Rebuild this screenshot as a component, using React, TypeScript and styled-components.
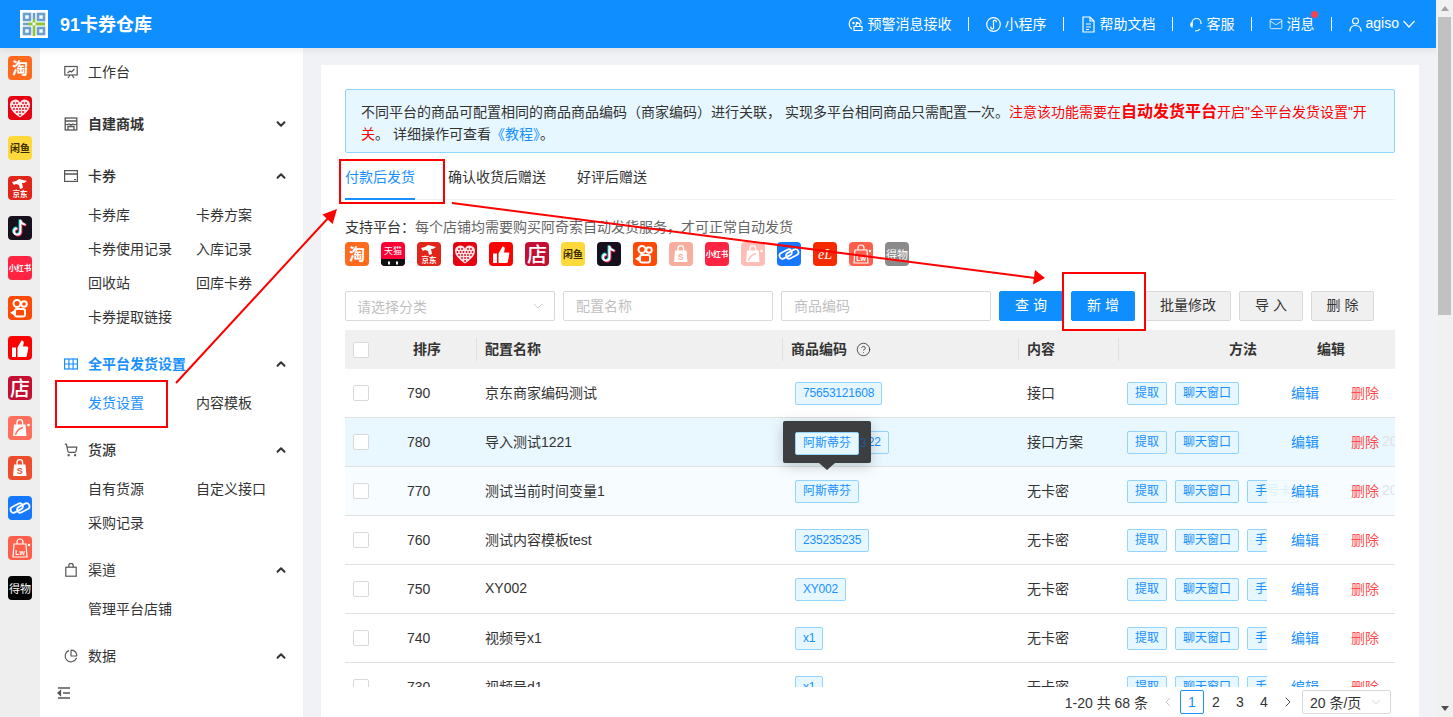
import React from 'react';
import styled, { createGlobalStyle } from 'styled-components';
import { ChevronDown, ChevronUp, CircleHelp, ChevronLeft, ChevronRight, Mail, ShoppingCart, PieChart } from 'lucide-react';

const FONT = `"Liberation Sans", "Noto Sans CJK SC", sans-serif`;
const BLUE = '#0f8eff';

const Global = createGlobalStyle`
  html, body { margin: 0; padding: 0; height: 717px; overflow: hidden; background: #f0f2f5; }
  body { font-family: ${FONT}; font-size: 14px; color: #333; }
  * { box-sizing: border-box; }
`;

const Page = styled.div`position: relative; display: flex; width: 1453px; height: 717px; overflow: hidden;`;
const Main = styled.div`flex: 1; min-width: 0; display: flex; flex-direction: column;`;

const Header = styled.header`
  height: 48px; flex: none; background: ${BLUE}; display: flex; align-items: center;
  padding: 0 21px 0 20px; color: #fff; position: relative; z-index: 2;
  box-shadow: 0 2px 8px rgba(0,21,41,.08);
`;
const LogoBox = styled.div`width: 28px; height: 28px; background: #fff; margin-right: 12px; display: flex;`;
const Title = styled.div`font-size: 18px; font-weight: 700; flex: 1; margin-top: -2px;`;
const NavItem = styled.div`display: flex; align-items: center; gap: 4px; font-size: 14px; white-space: nowrap;`;
const NavText = styled.span`position: relative; margin-top: -2px;`;
const NavSep = styled.i`width: 1px; height: 14px; background: #fff; margin: 0 17px 0 16px;`;
const Dot = styled.i`position: absolute; top: -2px; right: -3px; width: 7px; height: 7px; border-radius: 50%; background: #f5424d;`;

const Body = styled.div`flex: 1; min-height: 0; display: flex;`;
const Rail = styled.nav`width: 40px; flex: none; background: #eee; padding: 8px 8px 0; display: flex; flex-direction: column; gap: 16px;`;
const Sidebar = styled.aside`width: 263px; flex: none; background: #fff; display: flex; flex-direction: column; overflow: hidden;`;
const MenuList = styled.div`flex: 1; min-height: 0; overflow: hidden; display: flex; flex-direction: column; gap: 4px;`;
const MenuSection = styled.div`flex: none;`;
const MenuHead = styled.div<{ $active?: boolean; $weight: number }>`
  height: 48px; display: flex; align-items: center; padding: 0 15px 0 24px; gap: 10px;
  color: ${p => (p.$active ? '#1890ff' : '#333')}; font-weight: ${p => p.$weight};
  span { flex: 1; margin-top: -2px; }
  svg { flex: none; }
`;
const SubGrid = styled.div`display: grid; grid-template-columns: 108px 108px; padding-left: 48px; margin: -2px 0 2px;`;
const SubItem = styled.div<{ $active?: boolean }>`height: 34px; line-height: 34px; white-space: nowrap; color: ${p => (p.$active ? '#1890ff' : '#333')};`;
const SideFoot = styled.div`height: 48px; flex: none; display: flex; align-items: center; padding-left: 17px; background: #fff;`;

const Content = styled.main`flex: 1; min-width: 0; padding: 17px 17px 0 18px; display: flex;`;
const Card = styled.section`flex: 1; min-width: 0; background: #fff; padding: 24px 24px 0; display: flex; flex-direction: column;`;

const Alert = styled.div`
  height: 64px; flex: none; background: #e6f7ff; border: 1px solid #91d5ff; border-radius: 2px;
  padding: 11px 15px; line-height: 22px; white-space: nowrap; color: #333;
`;
const Red = styled.span`color: #f00;`;
const BigRed = styled.b`color: #f00; font-size: 16px; line-height: 1;`;
const LinkText = styled.span`color: #1890ff;`;

const Tabs = styled.div`height: 47px; flex: none; display: flex; border-bottom: 1px solid #f0f0f0;`;
const Tab = styled.div<{ $active?: boolean; $gap: number }>`
  height: 47px; line-height: 48px; margin-right: ${p => p.$gap}px; white-space: nowrap;
  color: ${p => (p.$active ? '#1890ff' : '#333')};
  border-bottom: 2px solid ${p => (p.$active ? '#1890ff' : 'transparent')};
`;

const Notice = styled.div`height: 20px; margin-top: 17px; line-height: 20px; flex: none; color: #666; b { font-weight: 400; color: #333; }`;
const PlatformRow = styled.div`display: flex; gap: 12px; margin-top: 5px; flex: none;`;
const LogoWrap = styled.div<{ $faded?: boolean }>`width: 24px; height: 24px; flex: none; opacity: ${p => (p.$faded ? 0.45 : 1)}; svg { display: block; }`;

const Toolbar = styled.div`display: flex; gap: 8px; margin-top: 25px; height: 30px; flex: none;`;
const Field = styled.input`
  width: 210px; height: 30px; border: 1px solid #d9d9d9; border-radius: 2px; padding: 0 12px;
  font: 14px ${FONT}; color: #333; outline: none; background: #fff;
  &::placeholder { color: #bfbfbf; opacity: 1; }
`;
const SelectBox = styled.div`
  width: 210px; height: 30px; border: 1px solid #d9d9d9; border-radius: 2px; padding: 0 8px 0 11px;
  display: flex; align-items: center; justify-content: space-between; color: #bfbfbf;
`;
const Btn = styled.div<{ $primary?: boolean; $w: number; $after?: number }>`
  width: ${p => p.$w}px; height: 30px; line-height: 27px; text-align: center; border-radius: 2px; white-space: pre;
  margin-right: ${p => p.$after ?? 0}px;
  background: ${p => (p.$primary ? BLUE : '#f0f0f0')}; color: ${p => (p.$primary ? '#fff' : '#333')};
  border: 1px solid ${p => (p.$primary ? BLUE : '#d9d9d9')};
`;

const TableWrap = styled.div`flex: 1; min-height: 0; margin-top: 9px; overflow: hidden;`;
const COLS = '50px 81px 306px 236px 100px 149px 128px';
const HeadRow = styled.div`
  display: grid; grid-template-columns: ${COLS}; height: 39px; background: #f0f0f0; align-items: center; font-weight: 700; color: #333;
`;
const HeadCell = styled.div<{ $pad: number; $line?: boolean }>`
  padding-left: ${p => p.$pad}px; display: flex; align-items: center; gap: 9px; height: 23px; white-space: nowrap;
  border-left: ${p => (p.$line ? '1px solid #e0e0e0' : '0')};
`;
const HeadLabel = styled.span`margin-top: -3px;`;
const Row = styled.div<{ $bg: string }>`
  display: grid; grid-template-columns: ${COLS}; height: 49px; align-items: stretch;
  background: ${p => p.$bg}; border-bottom: 1px solid #e0e0e0;
`;
const Cell = styled.div<{ $pad: number; $up?: boolean }>`
  padding-left: ${p => p.$pad}px; display: flex; align-items: center; white-space: nowrap; position: relative; color: #333;
  padding-bottom: ${p => (p.$up ? 2 : 0)}px;
`;
const MethodCell = styled(Cell)<{ $open?: boolean }>`gap: 8px; overflow: ${p => (p.$open ? 'visible' : 'hidden')};`;
const FixedCell = styled.div<{ $bg: string }>`
  padding: 0 0 2px 24px; display: flex; align-items: center; position: relative; overflow: hidden; white-space: nowrap; background: ${p => p.$bg};
`;
const EditLink = styled.span`color: #1890ff; margin-right: 32px;`;
const DelLink = styled.span`color: #ff4d4f; margin-right: 3px;`;
const Ghost = styled.span`color: #dce3e7;`;
const Check = styled.i`width: 16px; height: 16px; border: 1px solid #d9d9d9; border-radius: 2px; background: #fff; display: block; flex: none;`;
const Tag = styled.span<{ $narrow?: boolean }>`
  display: inline-block; height: 23px; line-height: 20px; padding: 0 7px; font-size: 12px; color: #1890ff; background: #e6f7ff;
  border: 1px solid #91d5ff; border-radius: 2px; white-space: nowrap; flex: none;
  letter-spacing: ${p => (p.$narrow ? '-0.2px' : '0')};
`;
const Tooltip = styled.div`
  position: absolute; left: 1px; top: 3px; width: 88px; height: 42px; background: #3c3e40; border-radius: 2px; z-index: 5;
  padding: 11px 0 0 12px; box-shadow: 0 3px 14px rgba(0,0,0,.2);
  &::after { content: ''; position: absolute; left: 36px; bottom: -7px; border: 8px solid transparent; border-bottom: 0; border-top: 7px solid #3c3e40; }
`;
const ShowThrough = styled.span`position: absolute; left: 77px; top: 12px; font-size: 12px; line-height: 20px; color: #1c5a9c;`;

const Pager = styled.div`height: 30px; flex: none; display: flex; align-items: center; justify-content: flex-end; padding-right: 4px; background: #fff;`;
const Total = styled.span`margin-right: 8px; color: #333;`;
const PageBtn = styled.div<{ $active?: boolean; $muted?: boolean }>`
  width: 24px; height: 24px; line-height: 22px; text-align: center; border-radius: 2px;
  display: flex; align-items: center; justify-content: center;
  color: ${p => (p.$active ? '#1890ff' : p.$muted ? '#bfbfbf' : '#333')};
  border: 1px solid ${p => (p.$active ? '#1890ff' : 'transparent')};
`;
const PageSize = styled.div`
  width: 89px; height: 24px; margin-left: 2px; border: 1px solid #d9d9d9; border-radius: 2px;
  display: flex; align-items: center; justify-content: space-between; padding: 0 7px; color: #333; white-space: nowrap;
`;

const ScrollTrack = styled.div`width: 17px; flex: none; background: #f1f1f1; display: flex; flex-direction: column; align-items: center; position: relative; z-index: 3;`;
const ScrollUp = styled.i`
  margin-top: 6px; height: 0; border: 4px solid transparent; border-top: 0; border-bottom: 5px solid #a3a3a3;
`;
const ScrollThumb = styled.i`width: 13px; height: 298px; margin-top: 6px; background: #c1c1c1;`;
const ScrollDown = styled.i`
  margin-top: auto; margin-bottom: 6px; height: 0; border: 4px solid transparent; border-bottom: 0; border-top: 5px solid #505050;
`;

const Notes = styled.svg`position: absolute; left: 0; top: 0; width: 1453px; height: 717px; pointer-events: none; z-index: 10;`;

type Kind = 'tao' | 'tmall' | 'jd' | 'pdd' | 'zan' | 'dian' | 'xianyu' | 'douyin' | 'kuai' | 'shopee' | 'xhs' | 'bag' | 'link' | 'el' | 'lw' | 'dewu';

const Txt: React.FC<{ x?: number; y: number; s: number; c?: string; w?: number; children: React.ReactNode; i?: boolean; f?: string }> = ({ x = 12, y, s, c = '#fff', w = 400, children, i, f = FONT }) => (
  <text x={x} y={y} fontSize={s} fill={c} fontWeight={w} textAnchor="middle" fontStyle={i ? 'italic' : 'normal'} fontFamily={f}>{children}</text>
);

const BagShape = () => (
  <>
    <path d="M6 8.500h11.500l1 11.500H5z" fill="#fff" />
    <path d="M9 9V6.500a2.800 2.800 0 0 1 5.600 0V9" fill="none" stroke="#fff" strokeWidth="1.300" />
  </>
);

const Logo: React.FC<{ kind: Kind }> = ({ kind }) => {
  const bg: Record<Kind, string> = {
    tao: '#ff6a1f', tmall: '#ff0036', jd: '#e1251b', pdd: '#e60012', zan: '#ff0000', dian: '#c40f33', xianyu: '#ffd93b', douyin: '#15101c',
    kuai: '#ff4906', shopee: '#ee4d2d', xhs: '#ff2442', bag: '#ff6f5c', link: '#1677ff', el: '#f52a00', lw: '#ff5f4a', dewu: '#000',
  };
  return (
    <svg width="24" height="24" viewBox="0 0 24 24">
      <rect width="24" height="24" rx="4" fill={bg[kind]} />
      {kind === 'tao' && <Txt y={18} s={16} w={700}>淘</Txt>}
      {kind === 'tmall' && (<><path d="M0 17h24v3a4 4 0 0 1-4 4H4a4 4 0 0 1-4-4z" fill="#111" /><Txt y={12} s={9}>天猫</Txt><path d="M8 19.500v3M16 19.500v3" stroke="#fff" strokeWidth="2" /></>)}
      {kind === 'jd' && (<><path d="M4 6l4-1 3-2 8 2-3 2-2 0 1 5-3 1-1-4-3-1-2 1z" fill="#fff" /><Txt y={21} s={7.500} w={700}>京东</Txt></>)}
      {kind === 'pdd' && (<>
        <path d="M12 21.500C6 17.500 2 13.500 2 8.800A5.200 5.200 0 0 1 12 6.800 5.200 5.200 0 0 1 22 8.800C22 13.500 18 17.500 12 21.500Z" fill="#ffe3e5" />
        {[[6, 7], [9, 7], [15, 7], [18, 7], [4.500, 10], [7.500, 10], [10.500, 10], [13.500, 10], [16.500, 10], [19.500, 10], [6, 13], [9, 13], [12, 13], [15, 13], [18, 13], [9, 16], [12, 16], [15, 16], [12, 19]].map(([x, y]) => <circle key={`${x}-${y}`} cx={x} cy={y} r=".9" fill="#e60012" />)}
      </>)}
      {kind === 'zan' && <path d="M4 11.500h4V21H4z M9.500 11.500l4-7c1.500 0 2.500 1 2.200 2.500L15 10.500h4c1 0 1.500 .8 1.300 1.700L18.800 20c-.2 .7-.7 1-1.300 1H9.500z" fill="#fff" />}
      {kind === 'dian' && <Txt y={20} s={20} w={500}>店</Txt>}
      {kind === 'xianyu' && <Txt y={16} s={10} c="#3a2d00" w={700}>闲鱼</Txt>}
      {kind === 'douyin' && (<>
        <path d="M12.500 4v11.500a3.200 3.200 0 1 1-3.200-3.200M12.500 4c.4 2.500 2 4.200 5 4.600" fill="none" stroke="#25f4ee" strokeWidth="2.200" transform="translate(-.8 -.6)" />
        <path d="M12.500 4v11.500a3.200 3.200 0 1 1-3.200-3.200M12.500 4c.4 2.500 2 4.200 5 4.600" fill="none" stroke="#fe2c55" strokeWidth="2.200" transform="translate(.8 .6)" />
        <path d="M12.500 4v11.500a3.200 3.200 0 1 1-3.200-3.200M12.500 4c.4 2.500 2 4.200 5 4.600" fill="none" stroke="#fff" strokeWidth="1.800" />
      </>)}
      {kind === 'kuai' && (<g fill="none" stroke="#fff" strokeWidth="2">
        <circle cx="9" cy="7.500" r="3.500" /><circle cx="16" cy="8" r="2.800" /><rect x="7" y="13" width="10" height="7.500" rx="2" /><path d="M7 15l-3 1.800 3 1.800" />
      </g>)}
      {kind === 'shopee' && (<><BagShape /><Txt x={11.800} y={17.500} s={9} c="#ee4d2d" w={700}>S</Txt></>)}
      {kind === 'xhs' && <Txt y={15} s={7.500} w={700}>小红书</Txt>}
      {kind === 'bag' && (<><BagShape /><path d="M7.500 19c1-4 3.500-6.500 7.500-7.500" stroke="#ff6f5c" strokeWidth="1.400" fill="none" /><circle cx="20.500" cy="9" r="1.300" fill="#fff" /></>)}
      {kind === 'link' && (<g fill="none" stroke="#fff" strokeWidth="1.800" transform="rotate(-28 12 12)">
        <rect x="2.500" y="7.500" width="13" height="6" rx="3" /><rect x="8.500" y="10.500" width="13" height="6" rx="3" />
      </g>)}
      {kind === 'el' && <Txt y={17} s={14} i f={`"Liberation Serif", serif`}>eL</Txt>}
      {kind === 'lw' && (<><path d="M6 8h12l1 13H5z M9 8V6a3 3 0 0 1 6 0v2" fill="none" stroke="#fff" strokeWidth="1.200" /><Txt y={19} s={7} w={700}>Lw</Txt><circle cx="21" cy="9" r="1.200" fill="#fff" /></>)}
      {kind === 'dewu' && <Txt y={16.500} s={11}>得物</Txt>}
    </svg>
  );
};

const QrLogo = () => (
  <svg width="28" height="28" viewBox="0 0 28 28">
    <g fill="none" stroke="#6a9fd0" strokeWidth="2.600">
      <rect x="4" y="4" width="6" height="6" /><rect x="18" y="4" width="6" height="6" /><rect x="4" y="18" width="6" height="6" /><rect x="18" y="18" width="6" height="6" />
      <path d="M14 3v6M3 14h5" />
    </g>
    <path d="M14 9v17M8 14h17" fill="none" stroke="#8cc63f" strokeWidth="2.800" />
    <rect x="12.500" y="12.500" width="3" height="3" fill="#fff" />
  </svg>
);

const line = { fill: 'none', stroke: 'currentColor', strokeWidth: 1.2 } as const;
const AlertIcon = () => (<svg width="16" height="16" viewBox="0 0 16 16" {...line}><path d="M4 13C2 11.800 1.200 9.800 1.200 7.800a6 6 0 0 1 12-.3" /><circle cx="5.500" cy="7" r=".6" /><circle cx="9" cy="7" r=".6" /><path d="M6 14.500h8v-4H6zM8 10.500V9.200a2 2 0 0 1 4 0v1.300" /></svg>);
const MiniIcon = () => (<svg width="15" height="15" viewBox="0 0 15 15" {...line}><circle cx="7.500" cy="7.500" r="6.800" /><path d="M5 9.500a1.500 1.500 0 1 0 2.500 0V5.500a1.500 1.500 0 1 1 2.500 0" /></svg>);
const DocIcon = () => (<svg width="15" height="17" viewBox="0 0 15 17" {...line}><path d="M2 1h7l4 4v11H2z" /><path d="M9 1v4h4M5 8h5M5 11h5M5 13.500h3" /></svg>);
const HeadsetIcon = () => (<svg width="13" height="15" viewBox="0 0 13 15" {...line}><path d="M2 9V6a4.500 4.500 0 0 1 9 0v1" /><path d="M2 5.500C1 6 .7 7 .7 7.800S1 9.500 2 10zM5 14c2 0 4-.5 5-2" /></svg>);
const UserIcon = () => (<svg width="13" height="15" viewBox="0 0 13 15" {...line}><circle cx="6.500" cy="4" r="3" /><path d="M1 14.500c0-4 2-6 5.500-6s5.500 2 5.500 6" /></svg>);
const VeeIcon = () => (<svg width="12" height="8" viewBox="0 0 12 8" {...line}><path d="M.5 1L6 7l5.500-6" /></svg>);
const BoardIcon = () => (<svg width="14" height="14" viewBox="0 0 14 14" fill="none" stroke="#555" strokeWidth="1.200"><rect x=".8" y="1.500" width="12.400" height="8.500" /><path d="M4 13l2-3M10 13l-2-3" /><path d="M3.500 8l2.500-2 1.500 1 3-3" /></svg>);
const ShopIcon = () => (<svg width="14" height="14" viewBox="0 0 14 14" fill="none" stroke="#555" strokeWidth="1.300"><rect x="1.200" y="1" width="11.600" height="12" /><path d="M1.200 4h11.600M1.200 7c1.500 1 2.500 1 3.900 0 1.300 1 2.500 1 3.800 0 1.400 1 2.400 1 3.900 0M4 13V9.500h6V13" /></svg>);
const CardIcon = () => (<svg width="14" height="14" viewBox="0 0 14 14" fill="none" stroke="#555" strokeWidth="1.200"><rect x=".6" y="1.600" width="12.800" height="10.800" /><path d="M.6 5h12.800" strokeWidth="1.500" /><path d="M10 10.500h2" /></svg>);
const GridIcon = () => (<svg width="14" height="14" viewBox="0 0 14 14" fill="none" stroke="#1890ff" strokeWidth="1.200"><rect x=".6" y="2" width="12.800" height="10" /><path d="M.6 7h12.800M4.900 2v10M9.100 2v10" /></svg>);
const BagIcon = () => (<svg width="14" height="14" viewBox="0 0 14 14" fill="none" stroke="#555" strokeWidth="1.200"><rect x="1.800" y="4.200" width="10.400" height="9" /><path d="M4.800 4.200V2.500a2.200 2.200 0 0 1 4.400 0v1.700" /></svg>);
const FoldIcon = () => (<svg width="14" height="12" viewBox="0 0 14 12" fill="none" stroke="#555" strokeWidth="1.300"><path d="M1 1h12M6 6h7M1 11h12" /><path d="M3.500 3.800L1 6l2.500 2.200z" fill="#555" /></svg>);

const railKinds: Kind[] = ['tao', 'pdd', 'xianyu', 'jd', 'douyin', 'xhs', 'kuai', 'zan', 'dian', 'bag', 'shopee', 'link', 'lw', 'dewu'];
const platforms: { k: Kind; faded?: boolean }[] = [
  { k: 'tao' }, { k: 'tmall' }, { k: 'jd' }, { k: 'pdd' }, { k: 'zan' }, { k: 'dian' }, { k: 'xianyu' }, { k: 'douyin' },
  { k: 'kuai' }, { k: 'shopee', faded: true }, { k: 'xhs' }, { k: 'bag', faded: true }, { k: 'link' }, { k: 'el' }, { k: 'lw' }, { k: 'dewu', faded: true },
];

const Chevron = ({ up }: { up?: boolean }) => up
  ? <ChevronUp size={14} strokeWidth={3.400} color="#333" />
  : <ChevronDown size={14} strokeWidth={3.400} color="#333" />;

const sections: { icon: React.ReactNode; label: string; weight?: number; active?: boolean; chev?: 'up' | 'down'; subs?: string[]; current?: string }[] = [
  { icon: <BoardIcon />, label: '工作台' },
  { icon: <ShopIcon />, label: '自建商城', weight: 700, chev: 'down' },
  { icon: <CardIcon />, label: '卡券', weight: 500, chev: 'up', subs: ['卡券库', '卡券方案', '卡券使用记录', '入库记录', '回收站', '回库卡券', '卡券提取链接'] },
  { icon: <GridIcon />, label: '全平台发货设置', weight: 700, active: true, chev: 'up', subs: ['发货设置', '内容模板'], current: '发货设置' },
  { icon: <ShoppingCart size={14} color="#555" />, label: '货源', weight: 500, chev: 'up', subs: ['自有货源', '自定义接口', '采购记录'] },
  { icon: <BagIcon />, label: '渠道', chev: 'up', subs: ['管理平台店铺'] },
  { icon: <PieChart size={14} color="#555" />, label: '数据', chev: 'up' },
];

const rows = [
  { sort: 790, name: '京东商家编码测试', code: '75653121608', type: '接口', third: false, bg: '#fff', fixed: '#fff' },
  { sort: 780, name: '导入测试1221', code: '121212121322', type: '接口方案', third: false, bg: '#e9f7fe', fixed: '#e9f7fe', ghost: true, tip: true },
  { sort: 770, name: '测试当前时间变量1', code: '阿斯蒂芬', type: '无卡密', third: true, bg: '#f6fcff', fixed: 'rgba(246,252,255,.88)', ghost: true, open: true },
  { sort: 760, name: '测试内容模板test', code: '235235235', type: '无卡密', third: true, bg: '#fff', fixed: '#fff' },
  { sort: 750, name: 'XY002', code: 'XY002', type: '无卡密', third: true, bg: '#fff', fixed: '#fff' },
  { sort: 740, name: '视频号x1', code: 'x1', type: '无卡密', third: true, bg: '#fff', fixed: '#fff' },
  { sort: 730, name: '视频号d1', code: 'x1', type: '无卡密', third: true, bg: '#fff', fixed: '#fff' },
];

const isLatin = (s: string) => /^[\x00-\x7f]+$/.test(s);

export default function App() {
  return (
    <Page>
      <Global />
      <Main>
        <Header>
          <LogoBox><QrLogo /></LogoBox>
          <Title>91卡券仓库</Title>
          <NavItem><AlertIcon /><NavText>预警消息接收</NavText></NavItem><NavSep />
          <NavItem><MiniIcon /><NavText>小程序</NavText></NavItem><NavSep />
          <NavItem><DocIcon /><NavText>帮助文档</NavText></NavItem><NavSep />
          <NavItem><HeadsetIcon /><NavText>客服</NavText></NavItem><NavSep />
          <NavItem><Mail size={14} strokeWidth={1.400} /><NavText>消息<Dot /></NavText></NavItem><NavSep />
          <NavItem><UserIcon /><NavText>agiso</NavText><VeeIcon /></NavItem>
        </Header>
        <Body>
          <Rail>{railKinds.map(k => <LogoWrap key={k}><Logo kind={k} /></LogoWrap>)}</Rail>
          <Sidebar>
            <MenuList>
              {sections.map(s => (
                <MenuSection key={s.label}>
                  <MenuHead $active={s.active} $weight={s.weight ?? 400}>
                    {s.icon}<span>{s.label}</span>{s.chev && <Chevron up={s.chev === 'up'} />}
                  </MenuHead>
                  {s.subs && (
                    <SubGrid>
                      {s.subs.map(t => <SubItem key={t} $active={t === s.current}>{t}</SubItem>)}
                    </SubGrid>
                  )}
                </MenuSection>
              ))}
            </MenuList>
            <SideFoot><FoldIcon /></SideFoot>
          </Sidebar>
          <Content>
            <Card>
              <Alert>
                不同平台的商品可配置相同的商品商品编码（商家编码）进行关联， 实现多平台相同商品只需配置一次。<Red>注意该功能需要在</Red><BigRed>自动发货平台</BigRed><Red>开启"全平台发货设置"开</Red>
                <br />
                <Red>关</Red>。 详细操作可查看<LinkText>《教程》</LinkText>。
              </Alert>
              <Tabs>
                <Tab $active $gap={33}>付款后发货</Tab>
                <Tab $gap={31}>确认收货后赠送</Tab>
                <Tab $gap={0}>好评后赠送</Tab>
              </Tabs>
              <Notice><b>支持平台：</b>每个店铺均需要购买阿奇索自动发货服务，才可正常自动发货</Notice>
              <PlatformRow>
                {platforms.map(p => <LogoWrap key={p.k} $faded={p.faded}><Logo kind={p.k} /></LogoWrap>)}
              </PlatformRow>
              <Toolbar>
                <SelectBox>请选择分类<ChevronDown size={16} strokeWidth={1.200} color="#bfbfbf" /></SelectBox>
                <Field placeholder="配置名称" readOnly />
                <Field placeholder="商品编码" readOnly />
                <Btn $primary $w={64}>查 询</Btn>
                <Btn $primary $w={64} $after={2}>新 增</Btn>
                <Btn $w={86}>批量修改</Btn>
                <Btn $w={64}>导 入</Btn>
                <Btn $w={63}>删 除</Btn>
              </Toolbar>
              <TableWrap>
                <HeadRow>
                  <HeadCell $pad={8}><Check /></HeadCell>
                  <HeadCell $pad={18}><HeadLabel>排序</HeadLabel></HeadCell>
                  <HeadCell $pad={8} $line><HeadLabel>配置名称</HeadLabel></HeadCell>
                  <HeadCell $pad={8} $line><HeadLabel>商品编码</HeadLabel><CircleHelp size={15} strokeWidth={1.300} /></HeadCell>
                  <HeadCell $pad={8} $line><HeadLabel>内容</HeadLabel></HeadCell>
                  <HeadCell $pad={110} $line><HeadLabel>方法</HeadLabel></HeadCell>
                  <HeadCell $pad={50}><HeadLabel>编辑</HeadLabel></HeadCell>
                </HeadRow>
                {rows.map(r => (
                  <Row key={r.sort} $bg={r.bg}>
                    <Cell $pad={8}><Check /></Cell>
                    <Cell $pad={12}>{r.sort}</Cell>
                    <Cell $pad={9} $up>{r.name}</Cell>
                    <Cell $pad={13}>
                      <Tag $narrow={isLatin(r.code)}>{r.code}</Tag>
                      {r.tip && <Tooltip><Tag>阿斯蒂芬</Tag><ShowThrough>3</ShowThrough></Tooltip>}
                    </Cell>
                    <Cell $pad={9} $up>{r.type}</Cell>
                    <MethodCell $pad={9} $open={r.open}>
                      <Tag>提取</Tag>
                      <Tag>聊天窗口</Tag>
                      {r.third && <Tag>手号卡</Tag>}
                    </MethodCell>
                    <FixedCell $bg={r.fixed}>
                      <EditLink>编辑</EditLink>
                      <DelLink>删除</DelLink>
                      {r.ghost && <Ghost>2023</Ghost>}
                    </FixedCell>
                  </Row>
                ))}
              </TableWrap>
              <Pager>
                <Total>1-20 共 68 条</Total>
                <PageBtn $muted><ChevronLeft size={16} strokeWidth={1.300} /></PageBtn>
                <PageBtn $active>1</PageBtn>
                <PageBtn>2</PageBtn>
                <PageBtn>3</PageBtn>
                <PageBtn>4</PageBtn>
                <PageBtn><ChevronRight size={16} strokeWidth={1.300} /></PageBtn>
                <PageSize>20 条/页<ChevronDown size={14} strokeWidth={1.200} color="#bfbfbf" /></PageSize>
              </Pager>
            </Card>
          </Content>
        </Body>
      </Main>
      <ScrollTrack>
        <ScrollUp />
        <ScrollThumb />
        <ScrollDown />
      </ScrollTrack>
      <Notes viewBox="0 0 1453 717" fill="none">
        <g stroke="#f00" strokeWidth="2">
          <rect x="340" y="160" width="104" height="43" />
          <rect x="56" y="381" width="111" height="46" />
          <rect x="1063" y="273" width="82" height="57" />
          <path d="M176 383L330 216" />
          <path d="M452 203L1035 278" />
        </g>
        <path d="M337 209L332.600 224L322.400 214.400Z" fill="#f00" />
        <path d="M1045 278L1033 284.500L1035 270Z" fill="#f00" />
      </Notes>
    </Page>
  );
}
